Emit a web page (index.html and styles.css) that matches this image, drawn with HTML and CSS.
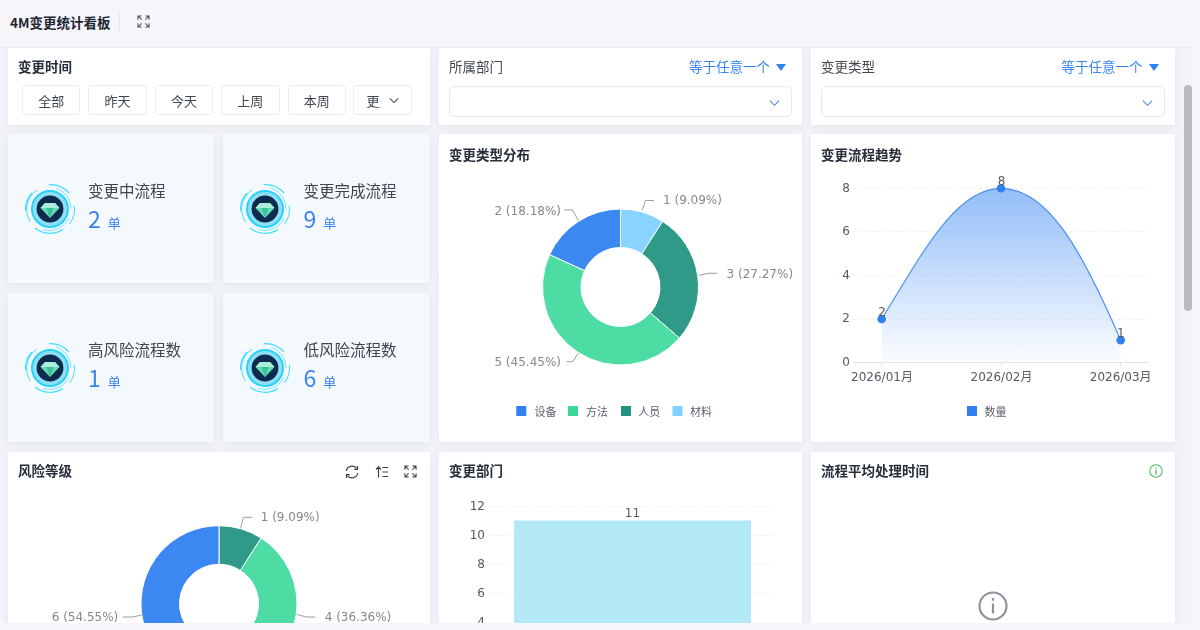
FILE: index.html
```html
<!DOCTYPE html>
<html lang="zh-CN">
<head>
<meta charset="utf-8">
<title>4M变更统计看板</title>
<link rel="stylesheet" href="styles.css">
</head>
<body>
<svg class="defs" width="0" height="0" aria-hidden="true">
  <defs>
    <symbol id="gem" viewBox="0 0 54 54">
      <circle cx="27" cy="27" r="18" fill="#8fdff2" stroke="#27d3fb" stroke-width="2"/>
      <circle cx="27" cy="27" r="13.4" fill="#0c2b4e"/>
      <g fill="none" stroke="#3fdcff">
        <path d="M26 2.6A24.5 24.5 0 0 1 46 11" stroke-width="1.2"/>
        <path d="M51.3 24A24.5 24.5 0 0 1 46.5 42" stroke-width="1"/>
        <path d="M40 47.5A24 24 0 0 1 12 46" stroke-width="1.2"/>
        <path d="M7.5 40A23 23 0 0 1 14 8" stroke-width="1"/>
        <path d="M2.5 29A24.5 24.5 0 0 1 9 11" stroke-width="1.2"/>
        <path d="M33 6A21.5 21.5 0 0 1 48 27" stroke-width=".7"/>
        <path d="M46 36A21.5 21.5 0 0 1 20 47.500" stroke-width=".7"/>
      </g>
      <path d="M22 21h10l4.500 5-9.500 10-9.500-10z" fill="#63dcb6"/>
      <path d="M22 21h10l4.500 5h-19z" fill="#a9efd9"/>
      <path d="M23.500 26h7L27 36z" fill="#3cc29b"/>
    </symbol>
    <symbol id="expand" viewBox="0 0 14 14">
      <path d="M1 5V1h4M9 1h4v4M13 9v4H9M5 13H1V9M1.500 1.500 5 5M12.500 1.500 9 5M12.500 12.500 9 9M1.500 12.500 5 9" fill="none" stroke="currentColor" stroke-width="1.100"/>
    </symbol>
    <linearGradient id="area" x1="0" y1="0" x2="0" y2="1">
      <stop offset="0" stop-color="#3b88f3" stop-opacity=".55"/>
      <stop offset="1" stop-color="#3b88f3" stop-opacity=".02"/>
    </linearGradient>
  </defs>
</svg>

<div class="app">
  <header class="topbar">
    <h1 class="page-title">4M变更统计看板</h1>
    <span class="divider"></span>
    <svg class="ico-expand"><use href="#expand"/></svg>
  </header>

  <main class="board">
    <section class="card filter">
      <div class="card-title">变更时间</div>
      <div class="quick">
        <button class="quick-btn">全部</button>
        <button class="quick-btn">昨天</button>
        <button class="quick-btn">今天</button>
        <button class="quick-btn">上周</button>
        <button class="quick-btn">本周</button>
        <button class="quick-btn more"><span class="more-text">更多</span>
          <svg class="more-chev" viewBox="0 0 12 8"><path d="M1 1.500 6 6.500 11 1.500" fill="none" stroke="#4a4f57" stroke-width="1.300"/></svg>
        </button>
      </div>
    </section>

    <section class="card filter">
      <div class="filter-head">
        <span class="filter-label">所属部门</span>
        <span class="filter-op">等于任意一个<i class="tri"></i></span>
      </div>
      <div class="select"><svg class="sel-chev" viewBox="0 0 12 8"><path d="M1 1.500 6 6.500 11 1.500" fill="none" stroke="#3c85f0" stroke-width="1.100"/></svg></div>
    </section>

    <section class="card filter">
      <div class="filter-head">
        <span class="filter-label">变更类型</span>
        <span class="filter-op">等于任意一个<i class="tri"></i></span>
      </div>
      <div class="select"><svg class="sel-chev" viewBox="0 0 12 8"><path d="M1 1.500 6 6.500 11 1.500" fill="none" stroke="#3c85f0" stroke-width="1.100"/></svg></div>
    </section>

    <section class="stats">
      <div class="stat">
        <svg class="gem"><use href="#gem"/></svg>
        <div class="stat-body"><div class="stat-label">变更中流程</div><div class="stat-value"><b>2</b><span>单</span></div></div>
      </div>
      <div class="stat">
        <svg class="gem"><use href="#gem"/></svg>
        <div class="stat-body"><div class="stat-label">变更完成流程</div><div class="stat-value"><b>9</b><span>单</span></div></div>
      </div>
      <div class="stat">
        <svg class="gem"><use href="#gem"/></svg>
        <div class="stat-body"><div class="stat-label">高风险流程数</div><div class="stat-value"><b>1</b><span>单</span></div></div>
      </div>
      <div class="stat">
        <svg class="gem"><use href="#gem"/></svg>
        <div class="stat-body"><div class="stat-label">低风险流程数</div><div class="stat-value"><b>6</b><span>单</span></div></div>
      </div>
    </section>

    <section class="card chart">
      <div class="chart-head"><span class="card-title">变更类型分布</span></div>
      <svg class="plot" viewBox="439 176 363 266" width="363" height="266">
        <g transform="translate(620.500 287)" stroke="#fff" stroke-width="1">
          <path d="M0-78A78 78 0 0 1 42.170-65.620L21.350-33.230A39.500 39.500 0 0 0 0-39.500Z" fill="#88d4ff"/>
          <path d="M42.170-65.620A78 78 0 0 1 58.940 51.080L29.850 25.870A39.500 39.500 0 0 0 21.350-33.230Z" fill="#2e9a87"/>
          <path d="M58.940 51.080A78 78 0 0 1-70.950-32.400L-35.930-16.410A39.500 39.500 0 0 0 29.850 25.870Z" fill="#4cdca4"/>
          <path d="M-70.950-32.400A78 78 0 0 1 0-78V-39.500A39.500 39.500 0 0 0-35.930-16.410Z" fill="#3b88f3"/>
        </g>
        <g class="leader">
          <polyline points="642.300,210 645.500,200.500 654,200.500"/>
          <polyline points="698.700,275.300 708.300,273.300 717.300,273.300"/>
          <polyline points="564.300,210 572.700,210 578.300,220.700"/>
          <polyline points="566.700,361.700 572.700,361.700 578.300,353.300"/>
        </g>
        <text class="pie-label" x="663" y="204">1 (9.09%)</text>
        <text class="pie-label" x="726.500" y="277.500">3 (27.27%)</text>
        <text class="pie-label end" x="561" y="214.500">2 (18.18%)</text>
        <text class="pie-label end" x="561" y="366">5 (45.45%)</text>
        <rect x="516.300" y="406" width="10" height="10" fill="#2f80f0"/><text class="legend" x="534.500" y="416">设备</text>
        <rect x="568" y="406" width="10" height="10" fill="#3bd89b"/><text class="legend" x="586" y="416">方法</text>
        <rect x="621" y="406" width="10" height="10" fill="#1f9480"/><text class="legend" x="638.300" y="416">人员</text>
        <rect x="672.500" y="406" width="10" height="10" fill="#82d2ff"/><text class="legend" x="690" y="416">材料</text>
      </svg>
    </section>

    <section class="card chart">
      <div class="chart-head"><span class="card-title">变更流程趋势</span></div>
      <svg class="plot" viewBox="811 176 363 266" width="363" height="266">
        <g class="grid">
          <line x1="853" y1="188.500" x2="1149" y2="188.500"/>
          <line x1="853" y1="231.500" x2="1149" y2="231.500"/>
          <line x1="853" y1="275.500" x2="1149" y2="275.500"/>
          <line x1="853" y1="319.500" x2="1149" y2="319.500"/>
        </g>
        <path d="M881.700 319C921 256 955 188.300 1001 188.300C1050 188.300 1085 258 1120.700 340.300V362.300H881.700Z" fill="url(#area)"/>
        <path d="M881.700 319C921 256 955 188.300 1001 188.300C1050 188.300 1085 258 1120.700 340.300" fill="none" stroke="#4a90f2" stroke-width="1.200"/>
        <g class="axis">
          <line x1="853" y1="362.500" x2="1149" y2="362.500"/>
          <line x1="881.500" y1="362" x2="881.500" y2="367"/>
          <line x1="1001.500" y1="362" x2="1001.500" y2="367"/>
          <line x1="1120.500" y1="362" x2="1120.500" y2="367"/>
        </g>
        <circle cx="881.700" cy="319" r="4.300" fill="#2f80f0"/>
        <circle cx="1001" cy="188.300" r="4.300" fill="#2f80f0"/>
        <circle cx="1120.700" cy="340.300" r="4.300" fill="#2f80f0"/>
        <text class="tick end" x="850" y="192">8</text>
        <text class="tick end" x="850" y="235">6</text>
        <text class="tick end" x="850" y="279">4</text>
        <text class="tick end" x="850" y="322">2</text>
        <text class="tick end" x="850" y="366">0</text>
        <text class="tick mid" x="882" y="316">2</text>
        <text class="tick mid" x="1001.500" y="185">8</text>
        <text class="tick mid" x="1120.700" y="337">1</text>
        <text class="tick mid" x="882" y="381">2026/01月</text>
        <text class="tick mid" x="1001.500" y="381">2026/02月</text>
        <text class="tick mid" x="1120.700" y="381">2026/03月</text>
        <rect x="967" y="406" width="10" height="10" fill="#2f80f0"/><text class="legend" x="984.500" y="416">数量</text>
      </svg>
    </section>

    <section class="card chart low">
      <div class="chart-head">
        <span class="card-title">风险等级</span>
        <span class="tools">
          <svg class="tool" viewBox="0 0 14 14"><path d="M1.200 6A5.900 5.900 0 0 1 11.500 3.200M12.800 8A5.900 5.900 0 0 1 2.500 10.800" fill="none" stroke="#3a3f47" stroke-width="1.200"/><path d="M12.500 1v3.400H9.200M1.500 13V9.600h3.300" fill="none" stroke="#3a3f47" stroke-width="1.200"/></svg>
          <svg class="tool" viewBox="0 0 14 14"><path d="M3.500 12.500V2M1 4.500 3.500 1.800 6 4.500M7.500 2.500H13M7.500 7H13M7.500 11.500H13" fill="none" stroke="#3a3f47" stroke-width="1.200"/></svg>
          <svg class="tool dark"><use href="#expand"/></svg>
        </span>
      </div>
      <svg class="plot" viewBox="8 494 422 200" width="422" height="200">
        <g transform="translate(219 603.700)" stroke="#fff" stroke-width="1">
          <path d="M0-78A78 78 0 0 1 42.170-65.620L21.350-33.230A39.500 39.500 0 0 0 0-39.500Z" fill="#2e9a87"/>
          <path d="M42.170-65.620A78 78 0 0 1 21.970 74.840L11.130 37.900A39.500 39.500 0 0 0 21.350-33.230Z" fill="#4cdca4"/>
          <path d="M21.970 74.840A78 78 0 1 1 0-78V-39.500A39.500 39.500 0 1 0 11.130 37.900Z" fill="#3b88f3"/>
        </g>
        <g class="leader">
          <polyline points="240.700,528.300 243.300,517.300 252.300,517.300"/>
          <polyline points="296.700,614.300 306,617 315.300,617"/>
          <polyline points="122.700,617 132.700,617 141.700,615"/>
        </g>
        <text class="pie-label" x="260.700" y="521">1 (9.09%)</text>
        <text class="pie-label" x="324.700" y="621">4 (36.36%)</text>
        <text class="pie-label end" x="118.300" y="621">6 (54.55%)</text>
      </svg>
    </section>

    <section class="card chart low">
      <div class="chart-head"><span class="card-title">变更部门</span></div>
      <svg class="plot" viewBox="439 494 363 200" width="363" height="200">
        <g class="grid">
          <line x1="489" y1="506.500" x2="777" y2="506.500"/>
          <line x1="489" y1="535.500" x2="777" y2="535.500"/>
          <line x1="489" y1="564.500" x2="777" y2="564.500"/>
          <line x1="489" y1="593.500" x2="777" y2="593.500"/>
        </g>
        <rect x="514" y="520.500" width="237" height="120" fill="#b3e8f6"/>
        <text class="tick end" x="485" y="509.500">12</text>
        <text class="tick end" x="485" y="538.500">10</text>
        <text class="tick end" x="485" y="567.500">8</text>
        <text class="tick end" x="485" y="596.500">6</text>
        <text class="tick end" x="485" y="625.500">4</text>
        <text class="tick mid" x="632.500" y="516.500">11</text>
      </svg>
    </section>

    <section class="card chart low">
      <div class="chart-head">
        <span class="card-title">流程平均处理时间</span>
        <svg class="tool info" viewBox="0 0 14 14"><circle cx="7" cy="7" r="6.200" fill="none" stroke="#52b95a" stroke-width="1.100"/><path d="M7 6v4.500M7 3.400v1.300" stroke="#52b95a" stroke-width="1.300" fill="none"/></svg>
      </div>
      <div class="empty">
        <svg class="empty-ico" viewBox="0 0 30 30"><circle cx="15" cy="15" r="13.500" fill="none" stroke="#8f939b" stroke-width="2.200"/><path d="M15 12.500v10M15 7v2.800" stroke="#8f939b" stroke-width="2.200" fill="none"/></svg>
      </div>
    </section>
  </main>

  <div class="scrollbar"></div>
</div>
</body>
</html>
```
FILE: styles.css
```css
* { box-sizing: border-box; }
html, body { margin: 0; height: 100%; overflow: hidden; background: #f6f6fa; }
body { font-family: "Noto Sans CJK SC", "Noto Sans", sans-serif; color: #2c3340; }
.defs { position: absolute; }

.app {
  position: relative;
  width: 1192px;
  height: 623px;
  background: #f2f3f8;
  border-radius: 0 8px 8px 8px;
  overflow: hidden;
  display: flex;
  flex-direction: column;
  filter: blur(.35px);
}

.topbar {
  flex: 0 0 48px;
  display: flex;
  align-items: center;
  padding: 0 0 4px 10px;
  background: #f5f5fa;
  border-bottom: 1px solid #ececf1;
}
.page-title { margin: 0; font-size: 13.500px; font-weight: 700; color: #1f2733; line-height: 18px; }
.divider { width: 1px; height: 19px; background: #e6e7ec; margin-left: 8.500px; }
.ico-expand { width: 13px; height: 13px; margin-left: 17px; color: #4c5260; }

.board {
  flex: 1;
  min-height: 0;
  overflow: hidden;
  display: grid;
  grid-template-columns: 422px 363px 363.500px;
  grid-template-rows: 77px 308px 240px;
  column-gap: 9px;
  row-gap: 9px;
  padding-left: 8px;
}

.card { background: #fff; box-shadow: 0 2px 8px rgba(40, 50, 90, .06); min-width: 0; }
.card-title { font-size: 13.500px; font-weight: 700; color: #262e3a; line-height: 18px; }

.filter { padding: 9px 10px 10px; }
.filter .card-title { height: 19px; }
.quick { display: flex; gap: 8px; margin: 9px 0 0 4px; }
.quick-btn {
  width: 58.400px;
  height: 30px;
  padding: 0;
  background: #fff;
  border: 1px solid #eceef2;
  border-radius: 3px;
  font: 13px "Noto Sans CJK SC", "Noto Sans", sans-serif;
  color: #3e4550;
  display: flex;
  align-items: center;
  justify-content: center;
}
.quick-btn:last-child { margin-left: -0.500px; }
.quick-btn.more { justify-content: flex-start; padding-left: 12px; }
.more-text { width: 15px; overflow: hidden; white-space: nowrap; }
.more-chev { width: 10px; height: 7px; margin-left: 8px; }

.filter-head { display: flex; justify-content: space-between; align-items: center; height: 18px; }
.filter-label { font-size: 13.500px; color: #42484f; }
.filter-op { font-size: 13.500px; color: #3c85f0; display: flex; align-items: center; padding-right: 6px; }
.tri {
  width: 0; height: 0; margin-left: 6px; margin-top: 2px;
  border-left: 5.500px solid transparent;
  border-right: 5.500px solid transparent;
  border-top: 7px solid #2f80f0;
}
.select {
  height: 31px;
  margin-top: 11px;
  border: 1px solid #e6e8ec;
  border-radius: 5px;
  display: flex;
  align-items: center;
  justify-content: flex-end;
  padding: 2px 11px 0 0;
}
.sel-chev { width: 11px; height: 8px; }

.stats {
  display: grid;
  grid-template-columns: 206px 207px;
  grid-template-rows: 149px 149px;
  column-gap: 9px;
  row-gap: 10px;
}
.stat {
  background: #f4f9fe;
  box-shadow: 0 2px 8px rgba(40, 50, 90, .07);
  display: flex;
  align-items: center;
  padding: 0 0 0 14.500px;
}
.stat:nth-child(even) { padding-left: 15px; }
.gem { width: 54px; height: 54px; flex: none; }
.stat-body { margin-left: 11.500px; }
.stat-label { font-size: 15.500px; line-height: 22px; color: #3f4650; white-space: nowrap; }
.stat-value { display: flex; align-items: baseline; color: #3b82f0; margin-top: 2px; line-height: 30px; }
.stat-value b { font-weight: 400; font-size: 23px; }
.stat-value span { font-size: 13px; margin-left: 7px; }

.chart { display: flex; flex-direction: column; overflow: hidden; }
.chart.low { margin-top: 1px; }
.chart-head {
  flex: 0 0 42px;
  display: flex;
  justify-content: space-between;
  align-items: flex-start;
  padding: 11px 12px 0 10px;
}
.low .chart-head { padding-top: 9px; }
.plot { display: block; flex: none; }
.tools { display: flex; gap: 15.500px; margin: 1px 1px 0 0; }
.tool { width: 14px; height: 14px; margin-top: 3px; }
.tool.dark { color: #3a3f47; width: 13px; height: 13px; }
.info { margin-top: 3px; }

.leader polyline { fill: none; stroke: #9a9da4; stroke-width: 1; }
.pie-label { font-family: "DejaVu Sans", "Noto Sans CJK SC", sans-serif; font-size: 12px; fill: #85888f; }
.end { text-anchor: end; }
.mid { text-anchor: middle; }
.legend { font-size: 11px; fill: #5e636c; }
.tick { font-family: "DejaVu Sans", "Noto Sans CJK SC", sans-serif; font-size: 12px; fill: #555a64; }
.grid line { stroke: #eef0f4; stroke-dasharray: 3 3; }
.axis line { stroke: #dfe2ea; }

.empty { display: flex; justify-content: center; padding-top: 97px; }
.empty-ico { width: 30px; height: 30px; }

.scrollbar {
  position: absolute;
  right: 0;
  top: 85px;
  width: 8px;
  height: 226px;
  background: #b9bbc4;
  border-radius: 4px;
}
```
